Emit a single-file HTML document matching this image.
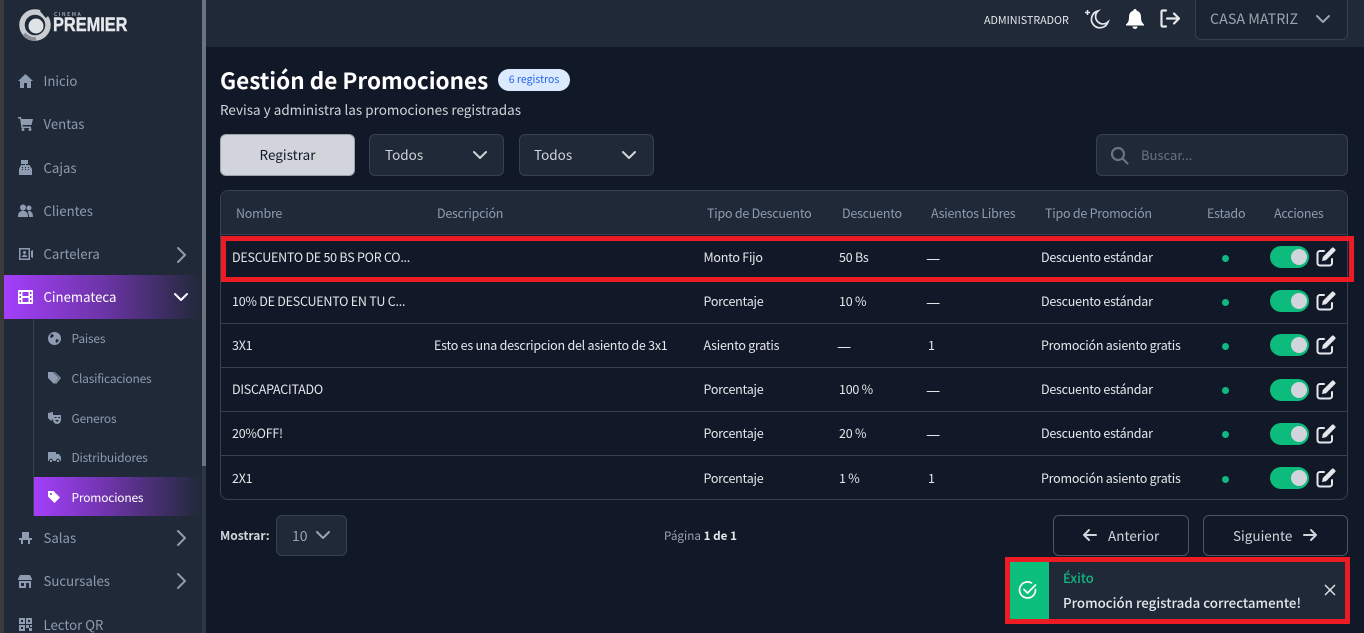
<!DOCTYPE html>
<html><head><meta charset="utf-8">
<style>
*{box-sizing:border-box;margin:0;padding:0}
html,body{width:1364px;height:633px;overflow:hidden;background:#111827}
body{position:relative;font-family:"Noto Sans CJK JP","Liberation Sans",sans-serif;font-size:13px;color:#e5e7eb}
.a{position:absolute;white-space:nowrap}
.t{position:absolute;white-space:nowrap;line-height:18px}
.nav{color:#8d9cb0;font-size:13.2px;left:43.5px}
.sub{color:#8d9cb0;font-size:12px;letter-spacing:-.2px;left:71.500px}
.ic{position:absolute;fill:#8d9cb0}
.ch{position:absolute;fill:none;stroke:#8d9cb0;stroke-width:2;stroke-linecap:round;stroke-linejoin:round}
.th{color:#8d9cb0;font-size:12.5px;letter-spacing:-.24px;top:204px}
.td{color:#e5e7eb;font-size:12.5px;letter-spacing:-.24px}
.d{font-size:16px;letter-spacing:0}
.box{position:absolute;background:#1f2937;border:1px solid #374151;border-radius:6px}
.line{position:absolute;left:221px;width:1127px;height:1px;background:#374151}
.dot{position:absolute;left:1222px;width:7px;height:7px;border-radius:50%;background:#10b981}
.sw{position:absolute;left:1270px;width:39px;height:22px;border-radius:11px;background:#0dbb7c}
.sw i{position:absolute;left:21px;top:3px;width:16px;height:16px;border-radius:50%;background:#d1d5db}
.ed{position:absolute;left:1316px;width:20px;height:20px}
</style></head><body>
<div class="a" style="left:0;top:0;width:4px;height:633px;background:#3b3b3b"></div>
<div class="a" style="left:4px;top:0;width:198px;height:633px;background:#1f2937"></div>
<div class="a" style="left:202px;top:0;width:4px;height:633px;background:#2b3544"></div>
<div class="a" style="left:202px;top:0;width:4px;height:466px;background:#6b7280"></div>
<div class="a" style="left:206px;top:0;width:1158px;height:47px;background:#1f2937"></div>

<svg class="a" style="left:18px;top:8px" width="34" height="34" viewBox="0 0 34 34"><circle cx="17" cy="17" r="13" fill="none" stroke="#c9ccd1" stroke-width="5.500"/><circle cx="18" cy="18" r="7.500" fill="#dfe2e6"/><path d="M10 23a9.500 9.500 0 0 1 4-14" stroke="#1f2937" stroke-width="2" fill="none"/><path d="M23 2l6 7" stroke="#1f2937" stroke-width="3"/><path d="M6 26a14 14 0 0 0 12 5" stroke="#8a8f97" stroke-width="4" fill="none"/></svg>
<div class="t" style="left:54px;top:12px;font-size:5px;line-height:6px;letter-spacing:1.500px;color:#9ca3af;font-weight:700">CINEMA</div>
<div class="t" style="left:53px;top:15px;font-size:19px;line-height:21px;font-weight:700;color:#e5e7eb;font-family:'Liberation Sans',sans-serif;transform:scaleX(.86);transform-origin:0 0;-webkit-text-stroke:.4px #e5e7eb">PREMIER</div>

<svg class="ic" style="left:18px;top:74px" width="15" height="14" viewBox="0 0 15 14"><path d="M7.500 0L0 7h2v7h4V9h3v5h4V7h2z"/></svg>
<div class="t nav" style="top:72px">Inicio</div>
<svg class="ic" style="left:18px;top:117px" width="15" height="14" viewBox="0 0 15 14"><path d="M0 0h3l.5 2H15l-1.500 6H4.500l.3 1.500H13V11H3.500L2 1.500H0z"/><circle cx="5" cy="12.500" r="1.500"/><circle cx="12" cy="12.500" r="1.500"/></svg>
<div class="t nav" style="top:115px">Ventas</div>
<svg class="ic" style="left:18px;top:160px" width="15" height="15" viewBox="0 0 15 15"><path d="M3 0h7v4H8v1h3.500L14 9v6H1V9l2-4h4V4H3z"/><path fill="#1f2937" d="M4 7h1v1H4zm3 0h1v1H7zm3 0h1v1h-1zM4 9h1v1H4zm3 0h1v1H7zm3 0h1v1h-1z"/></svg>
<div class="t nav" style="top:159px">Cajas</div>
<svg class="ic" style="left:18px;top:204px" width="15" height="13" viewBox="0 0 15 13"><circle cx="5" cy="3.500" r="3"/><circle cx="11" cy="4" r="2.500"/><path d="M0 12c0-7 10-7 10 0v1H0zM11 7c2.500 0 4 2 4 6h-4c0-2-.5-4-1.500-5z"/></svg>
<div class="t nav" style="top:202px">Clientes</div>
<svg class="ic" style="left:19px;top:248px" width="14" height="12" viewBox="0 0 14 12"><path fill-rule="evenodd" d="M0 0h11v12H0zM1.500 1.500v9h8v-9zM12 3l2-1v8l-2-1z"/><circle cx="5.500" cy="4.500" r="1.500"/><path d="M3 9c0-3 5-3 5 0z"/></svg>
<div class="t nav" style="top:245px">Cartelera</div>
<svg class="ch" style="left:175px;top:247px" width="12" height="16" viewBox="0 0 12 16"><path d="M3 1l7 7-7 7"/></svg>

<div class="a" style="left:4px;top:275px;width:198px;height:44px;background:linear-gradient(90deg,#a43ffb 0%,#6d34a8 50%,#1f2937 100%)"></div>
<svg class="a" style="left:18px;top:290px" width="15" height="14" viewBox="0 0 15 14"><path fill="#fff" fill-rule="evenodd" d="M1 0h13a1 1 0 0 1 1 1v12a1 1 0 0 1-1 1H1a1 1 0 0 1-1-1V1a1 1 0 0 1 1-1zm2 2H1.500v2H3zm0 4H1.500v2H3zm0 4H1.500v2H3zm1.500-8v4h6V2zm0 6v4h6V8zM12 2v2h1.500V2zm0 4v2h1.500V6zm0 4v2h1.500v-2z"/></svg>
<div class="t nav" style="top:288px;color:#fff">Cinemateca</div>
<svg class="ch" style="left:173px;top:292px;stroke:#fff" width="16" height="11" viewBox="0 0 16 11"><path d="M2 2l6 6 6-6"/></svg>

<div class="a" style="left:33px;top:319px;width:1px;height:197px;background:#374151"></div>
<svg class="ic" style="left:48px;top:332px" width="13" height="13" viewBox="0 0 13 13"><circle cx="6.500" cy="6.500" r="6.500"/><path fill="#1f2937" d="M3 2l3 1-1 2-2 1-1-1zM8 7l3 1-2 3-1.500-1z"/></svg>
<div class="t sub" style="top:330px">Paises</div>
<svg class="ic" style="left:48px;top:372px" width="13" height="12" viewBox="0 0 13 12"><path d="M0 0h5l6 6-5 6-6-6z"/><path d="M7 0l6 6-5 6-1-1 4.500-5L6 0z"/></svg>
<div class="t sub" style="top:370px">Clasificaciones</div>
<svg class="ic" style="left:48px;top:412px" width="13" height="12" viewBox="0 0 13 12"><path d="M0 1l5-1v7l-2 2-3-3z"/><path d="M5 3h8v5a4 4 0 0 1-8 0z"/><path fill="#1f2937" d="M6.500 5h2v1h-2zm3.500 0h2v1h-2zM7 8h4l-2 2z"/></svg>
<div class="t sub" style="top:410px">Generos</div>
<svg class="ic" style="left:48px;top:452px" width="13" height="11" viewBox="0 0 13 11"><path d="M0 0h8v2h3l2 3v4H0z"/><circle cx="3" cy="9" r="1.700" stroke="#1f2937"/><circle cx="10" cy="9" r="1.700" stroke="#1f2937"/></svg>
<div class="t sub" style="top:449px">Distribuidores</div>

<div class="a" style="left:34px;top:477px;width:168px;height:39px;background:linear-gradient(90deg,#a43ffb 0%,#6d34a8 45%,#1f2937 100%)"></div>
<svg class="a" style="left:48px;top:491px" width="12" height="12" viewBox="0 0 12 12"><path fill="#fff" d="M0 0h5.500L12 6.500 6.500 12 0 5.500z"/><circle cx="3" cy="3" r="1" fill="#7c3aed"/></svg>
<div class="t sub" style="top:489px;color:#fff">Promociones</div>

<svg class="ic" style="left:19px;top:532px" width="13" height="12" viewBox="0 0 13 12"><path d="M3 0h7v6H3zM0 6h13v2H0zM2 8h2v4H2zm7 0h2v4H9z"/></svg>
<div class="t nav" style="top:529px">Salas</div>
<svg class="ch" style="left:175px;top:530px" width="12" height="16" viewBox="0 0 12 16"><path d="M3 1l7 7-7 7"/></svg>
<svg class="ic" style="left:18px;top:575px" width="14" height="13" viewBox="0 0 14 13"><path d="M2 0h10l2 4v1H0V4zM1 6h12v7H1z"/><path fill="#1f2937" d="M3 8h3v3H3zm5 0h3v5H8z"/></svg>
<div class="t nav" style="top:572px">Sucursales</div>
<svg class="ch" style="left:175px;top:573px" width="12" height="16" viewBox="0 0 12 16"><path d="M3 1l7 7-7 7"/></svg>
<svg class="ic" style="left:19px;top:618px" width="13" height="13" viewBox="0 0 13 13"><path fill-rule="evenodd" d="M0 0h6v6H0zm2 2v2h2V2zM7 0h6v6H7zm2 2v2h2V2zM0 7h6v6H0zm2 2v2h2V9zM7 7h3v3H7zm4 0h2v2h-2zm-1 3h3v3h-3z"/></svg>
<div class="t nav" style="top:616px">Lector QR</div>

<div class="t" style="left:984px;top:12px;font-size:10.750px;color:#e5e7eb">ADMINISTRADOR</div>
<svg class="a" style="left:1084px;top:8px" width="26" height="23" viewBox="0 0 26 23" fill="none" stroke="#e5e7eb" stroke-width="1.700"><path d="M14 3a8.500 8.500 0 1 0 10 11 7 7 0 0 1-10-11z"/><path d="M1 4.500h5M3.500 2v5" stroke-width="1.500"/></svg>
<svg class="a" style="left:1126px;top:9px" width="18" height="20" viewBox="0 0 18 20"><path fill="#fff" d="M9 0a1.500 1.500 0 0 1 1.500 1.500A6 6 0 0 1 15 7.500c0 5 1 6 3 8v1H0v-1c2-2 3-3 3-8a6 6 0 0 1 4.500-6A1.500 1.500 0 0 1 9 0zM6.500 17.500h5a2.500 2.500 0 0 1-5 0z"/></svg>
<svg class="a" style="left:1160px;top:9px" width="21" height="19" viewBox="0 0 21 19" fill="none" stroke="#e5e7eb" stroke-width="2.200" stroke-linecap="round" stroke-linejoin="round"><path d="M6 1.500H2.500a1 1 0 0 0-1 1v14a1 1 0 0 0 1 1H6M7 9.500h12M14 4.500l5 5-5 5"/></svg>
<div class="box" style="left:1195px;top:-6px;width:153px;height:46px;background:#1b2432"></div>
<div class="t" style="left:1210px;top:10px;font-size:14.300px;color:#9ca3af">CASA MATRIZ</div>
<svg class="ch" style="left:1315px;top:14px;stroke:#9ca3af" width="16" height="11" viewBox="0 0 16 11"><path d="M2 2l6 6 6-6"/></svg>

<div class="t" style="left:220px;top:64px;font-size:22.500px;line-height:32px;font-weight:700;color:#fff">Gestión de Promociones</div>
<div class="t" style="left:498px;top:69px;width:72px;height:22px;line-height:21px;border-radius:11px;background:#dbeafe;color:#2563eb;font-size:10.500px;text-align:center">6 registros</div>
<div class="t" style="left:220px;top:100px;font-size:13.500px;color:#d1d5db">Revisa y administra las promociones registradas</div>

<div class="box" style="left:220px;top:134px;width:135px;height:42px;background:#d1d5db;border-color:#9ca3af"></div>
<div class="t" style="left:220px;top:145px;width:135px;text-align:center;font-size:13.500px;color:#111827">Registrar</div>
<div class="box" style="left:369px;top:134px;width:135px;height:42px"></div>
<div class="t" style="left:385px;top:145px;font-size:13.500px;color:#d1d5db">Todos</div>
<svg class="ch" style="left:472px;top:150px;stroke:#d1d5db" width="16" height="11" viewBox="0 0 16 11"><path d="M2 2l6 6 6-6"/></svg>
<div class="box" style="left:519px;top:134px;width:135px;height:42px"></div>
<div class="t" style="left:534px;top:145px;font-size:13.500px;color:#d1d5db">Todos</div>
<svg class="ch" style="left:621px;top:150px;stroke:#d1d5db" width="16" height="11" viewBox="0 0 16 11"><path d="M2 2l6 6 6-6"/></svg>
<div class="box" style="left:1096px;top:134px;width:252px;height:42px"></div>
<svg class="a" style="left:1110px;top:146px" width="19" height="19" viewBox="0 0 19 19" fill="none" stroke="#6b7280" stroke-width="2.200"><circle cx="8" cy="8" r="6"/><path d="M12.500 12.500l5 5" stroke-linecap="round"/></svg>
<div class="t" style="left:1141px;top:146px;font-size:13px;color:#6b7280">Buscar...</div>

<div class="a" style="left:220px;top:190px;width:1128px;height:310px;border:1px solid #374151;border-radius:8px;overflow:hidden"><div style="height:44px;background:#1f2937;border-bottom:1px solid #374151"></div></div>
<div class="line" style="top:279px"></div><div class="line" style="top:323px"></div><div class="line" style="top:367px"></div><div class="line" style="top:411px"></div><div class="line" style="top:455px"></div>

<div class="t th" style="left:236px">Nombre</div><div class="t th" style="left:437px">Descripción</div><div class="t th" style="left:707px">Tipo de Descuento</div><div class="t th" style="left:842px">Descuento</div><div class="t th" style="left:931px">Asientos Libres</div><div class="t th" style="left:1045px">Tipo de Promoción</div><div class="t th" style="left:1207px">Estado</div><div class="t th" style="left:1274px">Acciones</div>

<div class="t td" style="left:232px;top:248px">DESCUENTO DE 50 BS POR CO...</div><div class="t td" style="left:703.500px;top:248px">Monto Fijo</div><div class="t td" style="left:839px;top:248px">50 Bs</div><div class="t td d" style="left:926px;top:248px">—</div><div class="t td" style="left:1041px;top:248px">Descuento estándar</div>
<div class="t td" style="left:232px;top:292px">10% DE DESCUENTO EN TU C...</div><div class="t td" style="left:703.500px;top:292px">Porcentaje</div><div class="t td" style="left:839px;top:292px">10 %</div><div class="t td d" style="left:926px;top:292px">—</div><div class="t td" style="left:1041px;top:292px">Descuento estándar</div>
<div class="t td" style="left:232px;top:336px">3X1</div><div class="t td" style="left:434px;top:336px">Esto es una descripcion del asiento de 3x1</div><div class="t td" style="left:703.500px;top:336px">Asiento gratis</div><div class="t td d" style="left:837px;top:336px">—</div><div class="t td" style="left:928px;top:336px">1</div><div class="t td" style="left:1041px;top:336px">Promoción asiento gratis</div>
<div class="t td" style="left:232px;top:380px">DISCAPACITADO</div><div class="t td" style="left:703.500px;top:380px">Porcentaje</div><div class="t td" style="left:839px;top:380px">100 %</div><div class="t td d" style="left:926px;top:380px">—</div><div class="t td" style="left:1041px;top:380px">Descuento estándar</div>
<div class="t td" style="left:232px;top:424px">20%OFF!</div><div class="t td" style="left:703.500px;top:424px">Porcentaje</div><div class="t td" style="left:839px;top:424px">20 %</div><div class="t td d" style="left:926px;top:424px">—</div><div class="t td" style="left:1041px;top:424px">Descuento estándar</div>
<div class="t td" style="left:232px;top:469px">2X1</div><div class="t td" style="left:703.500px;top:469px">Porcentaje</div><div class="t td" style="left:839px;top:469px">1 %</div><div class="t td" style="left:928px;top:469px">1</div><div class="t td" style="left:1041px;top:469px">Promoción asiento gratis</div>

<div class="dot" style="top:255px"></div><div class="dot" style="top:299px"></div><div class="dot" style="top:343px"></div><div class="dot" style="top:387px"></div><div class="dot" style="top:431px"></div><div class="dot" style="top:476px"></div>
<div class="sw" style="top:246px"><i></i></div><div class="sw" style="top:290px"><i></i></div><div class="sw" style="top:334px"><i></i></div><div class="sw" style="top:379px"><i></i></div><div class="sw" style="top:423px"><i></i></div><div class="sw" style="top:467px"><i></i></div>
<svg class="ed" style="top:247px" viewBox="0 0 20 20"><path fill="none" stroke="#e5e7eb" stroke-width="2" stroke-linecap="round" d="M8 4H4a2.500 2.500 0 0 0-2.500 2.500V16A2.500 2.500 0 0 0 4 18.500h9.500A2.500 2.500 0 0 0 16 16v-4"/><path fill="#e5e7eb" d="M16 .8a1.200 1.200 0 0 1 1.700 0l1.500 1.500a1.200 1.200 0 0 1 0 1.700L10 13.200l-4 .8.8-4z"/></svg>
<svg class="ed" style="top:291px" viewBox="0 0 20 20"><path fill="none" stroke="#e5e7eb" stroke-width="2" stroke-linecap="round" d="M8 4H4a2.500 2.500 0 0 0-2.500 2.500V16A2.500 2.500 0 0 0 4 18.500h9.500A2.500 2.500 0 0 0 16 16v-4"/><path fill="#e5e7eb" d="M16 .8a1.200 1.200 0 0 1 1.700 0l1.500 1.500a1.200 1.200 0 0 1 0 1.700L10 13.200l-4 .8.8-4z"/></svg>
<svg class="ed" style="top:335px" viewBox="0 0 20 20"><path fill="none" stroke="#e5e7eb" stroke-width="2" stroke-linecap="round" d="M8 4H4a2.500 2.500 0 0 0-2.500 2.500V16A2.500 2.500 0 0 0 4 18.500h9.500A2.500 2.500 0 0 0 16 16v-4"/><path fill="#e5e7eb" d="M16 .8a1.200 1.200 0 0 1 1.700 0l1.500 1.500a1.200 1.200 0 0 1 0 1.700L10 13.200l-4 .8.8-4z"/></svg>
<svg class="ed" style="top:380px" viewBox="0 0 20 20"><path fill="none" stroke="#e5e7eb" stroke-width="2" stroke-linecap="round" d="M8 4H4a2.500 2.500 0 0 0-2.500 2.500V16A2.500 2.500 0 0 0 4 18.500h9.500A2.500 2.500 0 0 0 16 16v-4"/><path fill="#e5e7eb" d="M16 .8a1.200 1.200 0 0 1 1.700 0l1.500 1.500a1.200 1.200 0 0 1 0 1.700L10 13.200l-4 .8.8-4z"/></svg>
<svg class="ed" style="top:424px" viewBox="0 0 20 20"><path fill="none" stroke="#e5e7eb" stroke-width="2" stroke-linecap="round" d="M8 4H4a2.500 2.500 0 0 0-2.500 2.500V16A2.500 2.500 0 0 0 4 18.500h9.500A2.500 2.500 0 0 0 16 16v-4"/><path fill="#e5e7eb" d="M16 .8a1.200 1.200 0 0 1 1.700 0l1.500 1.500a1.200 1.200 0 0 1 0 1.700L10 13.200l-4 .8.8-4z"/></svg>
<svg class="ed" style="top:468px" viewBox="0 0 20 20"><path fill="none" stroke="#e5e7eb" stroke-width="2" stroke-linecap="round" d="M8 4H4a2.500 2.500 0 0 0-2.500 2.500V16A2.500 2.500 0 0 0 4 18.500h9.500A2.500 2.500 0 0 0 16 16v-4"/><path fill="#e5e7eb" d="M16 .8a1.200 1.200 0 0 1 1.700 0l1.500 1.500a1.200 1.200 0 0 1 0 1.700L10 13.200l-4 .8.8-4z"/></svg>

<div class="a" style="left:221px;top:236px;width:1133px;height:46px;border:5px solid #ed1c24"></div>

<div class="t" style="left:220px;top:527px;font-size:12px;font-weight:700;color:#d1d5db">Mostrar:</div>
<div class="box" style="left:276px;top:515px;width:71px;height:41px"></div>
<div class="t" style="left:292px;top:527px;font-size:14px;color:#9ca3af">10</div>
<svg class="ch" style="left:315px;top:530px;stroke:#9ca3af" width="16" height="11" viewBox="0 0 16 11"><path d="M2 2l6 6 6-6"/></svg>
<div class="t" style="left:664px;top:527px;font-size:11.700px;color:#9ca3af">Página <b style="color:#e5e7eb">1 de 1</b></div>
<div class="a" style="left:1053px;top:515px;width:136px;height:41px;border:1px solid #4b5563;border-radius:6px"></div>
<svg class="ch" style="left:1082px;top:528px;stroke:#d1d5db" width="15" height="14" viewBox="0 0 15 14"><path d="M14 7H2M7 2L2 7l5 5"/></svg>
<div class="t" style="left:1108px;top:526px;font-size:13.500px;color:#d1d5db">Anterior</div>
<div class="a" style="left:1203px;top:515px;width:145px;height:41px;border:1px solid #4b5563;border-radius:6px"></div>
<div class="t" style="left:1233px;top:526px;font-size:13.500px;color:#d1d5db">Siguiente</div>
<svg class="ch" style="left:1303px;top:528px;stroke:#d1d5db" width="15" height="14" viewBox="0 0 15 14"><path d="M1 7h12M8 2l5 5-5 5"/></svg>

<div class="a" style="left:1005px;top:557px;width:345px;height:67px;border:5px solid #ed1c24;background:#1f2937"></div>
<div class="a" style="left:1010px;top:562px;width:39px;height:57px;background:#0dbf7d"></div>
<svg class="a" style="left:1018px;top:580px" width="20" height="20" viewBox="0 0 20 20" fill="none" stroke="#fff" stroke-width="1.700" stroke-linecap="round" stroke-linejoin="round"><path d="M17.500 9.500a8 8 0 1 1-4-6.500"/><path d="M6 9.500l3.500 3.500 8-8"/></svg>
<div class="t" style="left:1063px;top:569px;font-size:13px;font-weight:500;color:#10b981">Éxito</div>
<div class="t" style="left:1063px;top:594px;font-size:13.300px;font-weight:500;color:#e5e7eb">Promoción registrada correctamente!</div>
<svg class="a" style="left:1323px;top:583px" width="14" height="14" viewBox="0 0 14 14" fill="none" stroke="#e5e7eb" stroke-width="1.400"><path d="M2 2l10 10M12 2L2 12"/></svg>
</body></html>
